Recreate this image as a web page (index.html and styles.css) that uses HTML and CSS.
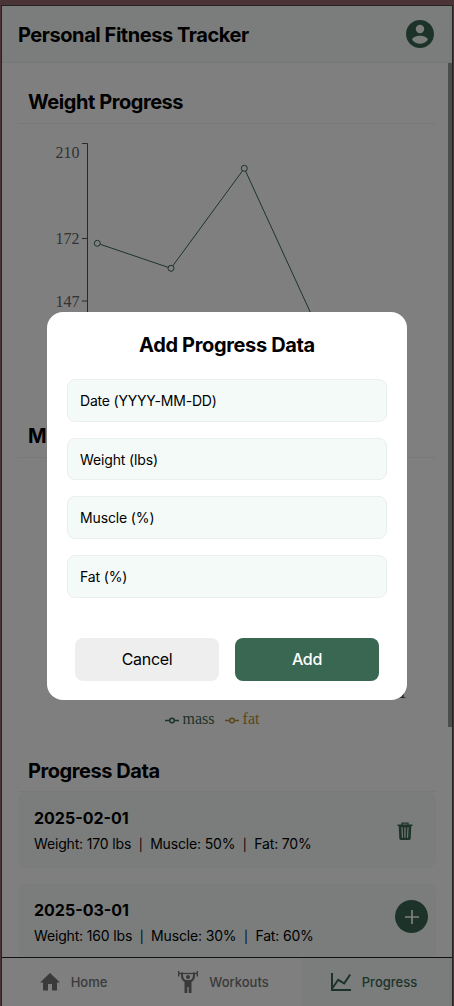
FILE: index.html
```html
<!DOCTYPE html>
<html lang="en">
<head>
<meta charset="utf-8">
<title>Personal Fitness Tracker</title>
<link rel="stylesheet" href="styles.css">
</head>
<body>
<div class="app">
  <header class="header">
    <h1 class="brand">Personal Fitness Tracker</h1>
    <svg class="avatar" viewBox="2 2 20 20"><path fill="currentColor" d="M12 2C6.48 2 2 6.48 2 12s4.48 10 10 10 10-4.480 10-10S17.520 2 12 2zm0 3.400a3 3 0 1 1 0 6 3 3 0 0 1 0-6zm0 13.600c-2.200 0-4.200-1-5.600-2.900.1-1.800 3.700-2.800 5.600-2.800s5.500 1 5.600 2.800C16.200 18 14.200 19 12 19z"/></svg>
  </header>
  <main class="content">
    <section class="chart-section">
      <h2 class="section-title">Weight Progress</h2>
      <svg class="chart" viewBox="0 0 418 230">
        <path class="axis" d="M64 20.500H69.500V220M64 115.500H69.500M64 178H69.500"/>
        <g class="tick" text-anchor="end"><text x="61.500" y="34.700">210</text><text x="61.500" y="121">172</text><text x="61.500" y="183.700">147</text></g>
        <path class="series" d="M79.300 120.300L153 145.300L226.300 45.300L300 206"/>
        <g class="dots"><circle cx="79.300" cy="120.300" r="3"/><circle cx="153" cy="145.300" r="3"/><circle cx="226.300" cy="45.300" r="3"/></g>
      </svg>
    </section>
    <section class="chart-section">
      <h2 class="section-title">Muscle &amp; Fat</h2>
      <svg class="chart" viewBox="0 0 418 230"><path class="axis" d="M69.500 20V220"/><text class="tick date-tick" text-anchor="end" x="388.500" y="240.500">1</text></svg>
      <div class="legend">
        <span class="legend-item mass"><svg class="key" viewBox="0 0 14 14"><path d="M0 7.500H4.700M9.300 7.500H14"/><circle cx="7" cy="7.500" r="2.300"/></svg>mass</span>
        <span class="legend-item fat"><svg class="key" viewBox="0 0 14 14"><path d="M0 7.500H4.700M9.300 7.500H14"/><circle cx="7" cy="7.500" r="2.300"/></svg>fat</span>
      </div>
    </section>
    <section class="entries">
      <h2 class="section-title">Progress Data</h2>
      <article class="entry">
        <div><h3 class="entry-date">2025-02-01</h3><p class="entry-text">Weight: 170 lbs &nbsp;<span class="bar">|</span>&nbsp; Muscle: 50% &nbsp;<span class="bar">|</span>&nbsp; Fat: 70%</p></div>
        <svg class="trash" viewBox="0 0 16 18"><path fill="none" stroke="currentColor" stroke-width="1.300" d="M5 3V1.200H11V3"/><path fill="currentColor" fill-rule="evenodd" d="M.5 2.400H15.500V4H14.300L13.700 16.600Q13.600 18 12.300 18H3.700Q2.400 18 2.300 16.600L1.700 4H.5zM4.400 5.200L4.900 15.800H6L5.500 5.200zM7.400 5.200V15.800H8.600V5.200zM10.500 5.200L10 15.800H11.100L11.600 5.200z"/></svg>
      </article>
      <article class="entry">
        <div><h3 class="entry-date">2025-03-01</h3><p class="entry-text">Weight: 160 lbs &nbsp;<span class="bar">|</span>&nbsp; Muscle: 30% &nbsp;<span class="bar">|</span>&nbsp; Fat: 60%</p></div>
      </article>
    </section>
    <span class="scrollbar"></span>
    <button class="fab" aria-label="Add"><svg viewBox="0 0 14 14"><path d="M7 0V14M0 7H14"/></svg></button>
  </main>
  <nav class="nav">
    <a class="tab"><svg class="home-icon" viewBox="0 0 20 18"><path fill="currentColor" d="M10 0L20 9.500H17V17.500H12V11H8V17.500H3V9.500H0z"/></svg>Home</a>
    <a class="tab workouts"><svg class="lift-icon" viewBox="0 0 20 22"><path fill="none" stroke="currentColor" d="M.7 0V5.500M19.300 0V5.500" stroke-width="1.400"/><path fill="none" stroke="currentColor" stroke-width="1.300" d="M0 2.500H20"/><circle cx="10" cy="6.100" r="2" fill="currentColor"/><path fill="currentColor" d="M3 1.500H5V5Q5.200 8 8 9H12Q14.800 8 15 5V1.500H17V5Q16.800 9 13.500 11V22H10.700V16H9.300V22H6.500V11Q3.200 9 3 5z"/></svg>Workouts</a>
    <a class="tab active"><svg class="graph-icon" viewBox="0 0 20 18"><path d="M1 0V17H20M1.500 15L7.200 6.800L13.200 10.300L19.200 1.500" fill="none" stroke="currentColor" stroke-width="2"/></svg>Progress</a>
  </nav>
</div>
<div class="overlay">
  <form class="modal">
    <h2 class="modal-title">Add Progress Data</h2>
    <div class="fields">
      <div class="field date">Date (YYYY-MM-DD)</div>
      <div class="field">Weight (lbs)</div>
      <div class="field">Muscle (%)</div>
      <div class="field">Fat (%)</div>
    </div>
    <div class="actions"><button type="button" class="btn">Cancel</button><button type="button" class="btn primary">Add</button></div>
  </form>
</div>
</body>
</html>
```

FILE: styles.css
```css
* { box-sizing: border-box; }
body { margin: 0; height: 1006px; overflow: hidden; padding: 5px 1px 0; background: #96686c; font-family: Inter, sans-serif; color: #000; }
h1, h2, h3, p { margin: 0; }
svg { display: block; flex: none; }
.app { height: 1001px; border: 1px solid #4c4648; border-bottom: 0; background: #fff; display: flex; flex-direction: column; }
.header { height: 57px; flex: none; background: #f4faf8; border-bottom: 1px solid #e8eeec; padding: 0 18px 0 16px; display: flex; align-items: center; justify-content: space-between; }
.brand, .section-title, .modal-title { font-size: 20px; font-weight: 700; line-height: 24px; letter-spacing: -.44px; }
.brand { padding-top: 2px; }
.avatar { width: 28px; height: 28px; color: #3a6752; }
.content { position: relative; flex: 1; min-height: 0; overflow: hidden; padding: 16px 16px 0; }
.section-title { height: 45px; padding: 11px 10px 0; border-bottom: 1px solid #f2f2f2; }
.entries .section-title { padding-top: 12px; }
.chart-section { height: 334px; }
.chart { width: 418px; height: 230px; margin-top: -1px; overflow: visible; }
.axis { fill: none; stroke: #555; stroke-width: 1; }
.tick { font: 16px "Liberation Serif", serif; fill: #666; }
.date-tick { fill: #333; }
.series, .dots { fill: #fff; stroke: #3a6752; stroke-width: 1; }
.series { fill: none; }
.legend { display: flex; justify-content: center; gap: 10px; padding-top: 23px; padding-right: 30px; font: 16px/18px "Liberation Serif", serif; }
.legend-item { display: flex; align-items: center; gap: 4px; }
.key { width: 14px; height: 14px; margin-top: 1px; fill: none; stroke: currentColor; stroke-width: 1.5; }
.mass { color: #3a6752; }
.fat { color: #b38e35; }
.entry { height: 76px; margin-bottom: 16px; padding: 0 23px 2px 16px; border-radius: 8px; background: #f4faf8; display: flex; align-items: center; justify-content: space-between; }
.entry-date { font-size: 16px; line-height: 20px; letter-spacing: 0; margin-top: 2px; }
.entry-text { font-size: 14px; line-height: 17px; margin-top: 7px; letter-spacing: -.16px; white-space: nowrap; }
.bar { display: inline-block; font-size: 12px; vertical-align: .5px; line-height: 12px; }
.trash { width: 16px; height: 18px; color: #3a6752; margin-top: 3px; }
.scrollbar { position: absolute; right: 0; top: 0; width: 4px; height: 664px; background: #9a9a9a; }
.fab { position: absolute; right: 24px; bottom: 24px; width: 33px; height: 33px; border: 0; border-radius: 50%; padding: 0; background: #3a6752; display: grid; place-items: center; }
.fab svg { width: 14px; height: 14px; stroke: #fff; stroke-width: 1.7; }
.nav { flex: none; height: 49px; border-top: 1px solid #222; display: grid; grid-template-columns: 1fr 1fr 1fr; font-size: 13px; font-weight: 500; color: #747474; }
.tab { display: flex; align-items: center; justify-content: center; gap: 11px; padding-right: 7px; }
.home-icon { width: 20px; height: 18px; }
.lift-icon { width: 20px; height: 22px; }
.graph-icon { width: 20px; height: 18px; }
.active { background: #f4faf8; color: #3a6752; padding-right: 6px; }
.overlay { position: fixed; inset: 0; background: rgba(0,0,0,.5); display: flex; align-items: center; justify-content: center; }
.modal { width: 360px; height: 388px; margin-top: 6px; padding: 21px 20px 20px; border-radius: 16px; background: #fff; }
.modal-title { text-align: center; letter-spacing: -.35px; }
.fields { display: flex; flex-direction: column; gap: 16px; margin-top: 22.2px; }
.field { height: 42.6px; border: 1px solid #eaefed; border-radius: 8px; background: #f4faf8; padding: 0 12px; display: flex; align-items: center; font-size: 14px; letter-spacing: -.14px; }
.date { letter-spacing: -.2px; }
.actions { display: flex; gap: 16px; padding: 0 8px; margin-top: 40px; }
.btn { flex: 1; height: 43px; border: 0; border-radius: 8px; padding: 0; background: #eee; color: #000; font: 400 16px Inter, sans-serif; letter-spacing: -.3px; }
.primary { background: #3a6752; color: #fff; font-weight: 500; }
```
